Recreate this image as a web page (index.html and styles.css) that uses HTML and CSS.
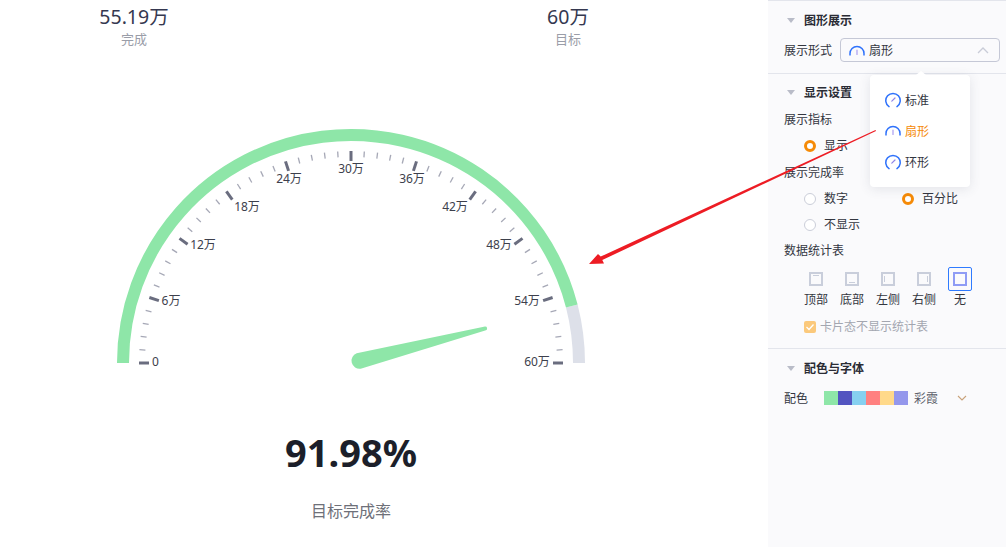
FILE: index.html
```html
<!DOCTYPE html>
<html lang="zh-CN">
<head>
    <meta charset="UTF-8">
    <title>目标完成率</title>
    <link rel="stylesheet" href="styles.css">
</head>
<body>
    <svg class="defs" width="0" height="0">
        <symbol id="icon-dial" viewBox="0 0 16 16">
            <path d="M4 14.6A7.2 7.2 0 1 1 12 14.6" fill="none" stroke="#2f72fb" stroke-width="1.5" stroke-linecap="round"/>
            <path d="M6.8 9.2L10 6" stroke="#8f83e8" stroke-width="1.2" stroke-linecap="round"/>
        </symbol>
        <symbol id="icon-fan" viewBox="0 0 16 11">
            <path d="M1 10.5V8.4A7 7 0 0 1 15 8.4V10.5" fill="none" stroke="#2f72fb" stroke-width="1.5"/>
            <path d="M8 5V9.5" stroke="#a99cf0" stroke-width="1.2" stroke-linecap="round"/>
        </symbol>
    </svg>

    <div class="app">
        <div class="main">
            <div class="stats">
                <div class="stat">
                    <div class="stat-value">55.19万</div>
                    <div class="stat-label">完成</div>
                </div>
                <div class="stat">
                    <div class="stat-value">60万</div>
                    <div class="stat-label">目标</div>
                </div>
            </div>

            <!-- 仪表盘 -->
            <svg class="gauge" viewBox="0 120 768 250" width="768" height="250">
                <path class="track" d="M571.8 306.1A228 228 0 0 1 579 363"/>
                <path class="band" d="M123 363A228 228 0 0 1 571.8 306.1"/>
                <g id="ticks"></g>
                <text class="tick-label" x="152" y="363">0</text>
                <text class="tick-label mid" x="171" y="302">6万</text>
                <text class="tick-label mid" x="203" y="246">12万</text>
                <text class="tick-label mid" x="247" y="208">18万</text>
                <text class="tick-label mid" x="289" y="180">24万</text>
                <text class="tick-label mid" x="351" y="170">30万</text>
                <text class="tick-label mid" x="412" y="180">36万</text>
                <text class="tick-label mid" x="455" y="208">42万</text>
                <text class="tick-label mid" x="499" y="246">48万</text>
                <text class="tick-label mid" x="527" y="302">54万</text>
                <text class="tick-label mid" x="537" y="363">60万</text>
                <path class="needle" d="M356.7 353.3L485 326.5A2 2 0 0 1 486 330.3L360.7 368.7A8 8 0 0 1 356.7 353.3Z"/>
            </svg>

            <div class="rate">91.98%</div>
            <div class="rate-label">目标完成率</div>
        </div>

        <div class="panel">
            <div class="section section-shape">
                <div class="section-title"><i class="caret"></i>图形展示</div>
                <div class="shape-row">
                    <span>展示形式</span>
                    <div class="select">
                        <svg class="fan-icon" width="16" height="11"><use href="#icon-fan"/></svg>
                        <span>扇形</span>
                        <svg class="select-arrow" width="12" height="7" viewBox="0 0 12 7"><path d="M1 6L6 1L11 6" fill="none" stroke="#c9ccd8" stroke-width="1.3"/></svg>
                    </div>
                </div>
            </div>

            <div class="section section-display">
                <div class="section-title"><i class="caret"></i>显示设置</div>
                <div class="row">展示指标</div>
                <div class="row indent"><label class="radio"><i class="dot on"></i>显示</label></div>
                <div class="row row-rate">展示完成率</div>
                <div class="row indent radio-pair">
                    <label class="radio"><i class="dot"></i>数字</label>
                    <label class="radio"><i class="dot on"></i>百分比</label>
                </div>
                <div class="row indent"><label class="radio"><i class="dot"></i>不显示</label></div>
                <div class="row">数据统计表</div>
                <div class="positions">
                    <div class="pos"><span class="pos-box"><i class="pos-icon top"></i></span>顶部</div>
                    <div class="pos"><span class="pos-box"><i class="pos-icon bottom"></i></span>底部</div>
                    <div class="pos"><span class="pos-box"><i class="pos-icon left"></i></span>左侧</div>
                    <div class="pos"><span class="pos-box"><i class="pos-icon right"></i></span>右侧</div>
                    <div class="pos active"><span class="pos-box"><i class="pos-icon"></i></span>无</div>
                </div>
                <div class="row indent check-row">
                    <span class="check"><svg width="12" height="12" viewBox="0 0 12 12"><path d="M2.5 6L5 8.5L9.5 3.5" fill="none" stroke="#fff" stroke-width="1.3"/></svg></span>
                    卡片态不显示统计表
                </div>
            </div>

            <div class="section section-color">
                <div class="section-title"><i class="caret"></i>配色与字体</div>
                <div class="color-row">
                    <span class="color-label">配色</span>
                    <span class="swatches">
                        <i class="swatch s1"></i><i class="swatch s2"></i><i class="swatch s3"></i><i class="swatch s4"></i><i class="swatch s5"></i><i class="swatch s6"></i>
                    </span>
                    <span class="color-name">彩霞</span>
                    <svg class="color-arrow" width="10" height="6" viewBox="0 0 10 6"><path d="M1 1L5 5L9 1" fill="none" stroke="#c9a27a" stroke-width="1.1"/></svg>
                </div>
            </div>

            <!-- 下拉菜单 -->
            <div class="dropdown">
                <div class="option"><svg width="16" height="16"><use href="#icon-dial"/></svg>标准</div>
                <div class="option selected"><svg width="16" height="11"><use href="#icon-fan"/></svg>扇形</div>
                <div class="option"><svg width="16" height="16"><use href="#icon-dial"/></svg>环形</div>
            </div>
        </div>
    </div>

    <!-- 标注箭头 -->
    <svg class="annotation" width="1006" height="547">
        <polygon points="875.5,130 876,131 602.3,260 604,263.5 589,264 598,254 600.7,256.6" fill="#ed1c24"/>
    </svg>

    <script src="script.js"></script>
</body>
</html>
```

FILE: styles.css
```css
* {
    box-sizing: border-box;
}

html, body {
    height: 100%;
}

body {
    margin: 0;
    overflow: hidden;
    background: #fff;
    color: #33363f;
    font-family: "Noto Sans", "Noto Sans CJK SC", sans-serif;
    font-size: 12px;
}

i {
    font-style: normal;
}

.defs {
    position: absolute;
}

.app {
    display: flex;
    height: 100%;
}

/* left side */
.main {
    width: 768px;
    flex: none;
}

.stats {
    display: flex;
    gap: 166px;
    height: 49px;
    padding-top: 3px;
}

.stat {
    width: 268px;
    text-align: center;
}

.stat-value {
    font-size: 19.5px;
    line-height: 28px;
    color: #353850;
}

.stat-label {
    font-size: 13px;
    line-height: 17px;
    color: #9a9da8;
}

.gauge {
    display: block;
    margin-top: 71px;
}

.band, .track {
    fill: none;
    stroke-width: 12;
}

.band {
    stroke: #8ee6a8;
}

.track {
    stroke: #dde0e9;
}

.needle {
    fill: #8ee6a8;
}

.tick-major {
    stroke: #6a6d7f;
    stroke-width: 3;
}

.tick-minor {
    stroke: #a6a8b6;
    stroke-width: 1.3;
}

.tick-label {
    fill: #3d404c;
    font-size: 12px;
    dominant-baseline: middle;
}

.tick-label.mid {
    text-anchor: middle;
}

.rate {
    width: 702px;
    margin-top: 54px;
    font-size: 38px;
    font-weight: 700;
    line-height: 56px;
    text-align: center;
    color: #1c1f2a;
}

.rate-label {
    width: 702px;
    margin-top: 21px;
    font-size: 16px;
    line-height: 20px;
    text-align: center;
    color: #6e7079;
}

/* right side */
.panel {
    position: relative;
    flex: 1;
    background: #fafafc;
    border-top: 1px solid #e3e5ec;
}

.section {
    border-bottom: 1px solid #e3e5ec;
}

.section-shape {
    height: 73px;
    padding: 10px 6px 0 16px;
}

.section-display {
    height: 275px;
    padding: 9px 0 0 16px;
}

.section-display .section-title {
    margin-bottom: 6px;
}

.section-color {
    padding: 10px 6px 0 16px;
    border-bottom: 0;
}

.section-title {
    display: flex;
    align-items: center;
    height: 18px;
    font-weight: 700;
    color: #2a2c35;
}

.caret {
    width: 0;
    height: 0;
    margin: 0 9px 0 3px;
    border-style: solid;
    border-width: 5px 4px 0;
    border-color: #b9bcc8 transparent transparent;
}

.shape-row {
    display: flex;
    align-items: center;
    gap: 8px;
    margin-top: 9px;
}

.select {
    display: flex;
    align-items: center;
    flex: 1;
    height: 24px;
    padding: 0 10px 0 8px;
    border: 1px solid #c5c8d6;
    border-radius: 4px;
}

.fan-icon {
    margin-right: 4px;
}

.select-arrow {
    margin-left: auto;
}

.row {
    height: 26px;
    line-height: 26px;
}

.row-rate {
    margin-top: 1px;
}

.indent {
    padding-left: 20px;
}

.radio {
    display: inline-flex;
    align-items: center;
    gap: 8px;
}

.radio-pair {
    display: flex;
}

.radio-pair .radio:first-child {
    width: 98px;
}

.dot {
    width: 12px;
    height: 12px;
    border: 1px solid #cbced9;
    border-radius: 50%;
    background: #fff;
}

.dot.on {
    border: 3px solid #f58a07;
}

.positions {
    display: flex;
    margin-left: 14px;
}

.pos {
    display: flex;
    flex-direction: column;
    align-items: center;
    width: 36px;
    line-height: 16px;
}

.pos-box {
    display: flex;
    align-items: center;
    justify-content: center;
    width: 24px;
    height: 24px;
    margin: 3px 0 1px;
    border: 1px solid transparent;
    border-radius: 2px;
}

.pos.active .pos-box {
    border-color: #2f7bff;
}

.pos-icon {
    position: relative;
    width: 14px;
    height: 14px;
    border: 2px solid #c9cedb;
}

.pos.active .pos-icon {
    border-color: #8f9cf5;
}

.pos-icon.top::after, .pos-icon.bottom::after {
    content: "";
    position: absolute;
    left: 2px;
    width: 6px;
    height: 1px;
    background: #c9cedb;
}

.pos-icon.top::after {
    top: 1px;
}

.pos-icon.bottom::after {
    bottom: 1px;
}

.pos-icon.left::after, .pos-icon.right::after {
    content: "";
    position: absolute;
    top: 2px;
    width: 1px;
    height: 6px;
    background: #c9cedb;
}

.pos-icon.left::after {
    left: 1px;
}

.pos-icon.right::after {
    right: 1px;
}

.check-row {
    display: flex;
    align-items: center;
    gap: 4px;
    margin-top: 6px;
    color: #a3a6b0;
}

.check {
    display: flex;
    width: 12px;
    height: 12px;
    border-radius: 2px;
    background: #fbc97c;
}

.color-row {
    display: flex;
    align-items: center;
    margin-top: 12px;
    height: 18px;
}

.color-label {
    width: 40px;
}

.swatches {
    display: flex;
}

.swatch {
    width: 14px;
    height: 14px;
}

.s1 { background: #8ee6a8; }
.s2 { background: #5254c0; }
.s3 { background: #86d0f0; }
.s4 { background: #ff8080; }
.s5 { background: #ffd98a; }
.s6 { background: #9497ec; }

.color-name {
    margin-left: 6px;
    color: #5c5f6a;
}

.color-arrow {
    margin-left: 19px;
}

.dropdown {
    position: absolute;
    top: 74px;
    left: 102px;
    width: 100px;
    height: 112px;
    padding-top: 9px;
    border-radius: 4px;
    background: #fff;
    box-shadow: 0 2px 12px rgba(60, 64, 90, 0.12);
}

.dropdown::before {
    content: "";
    position: absolute;
    top: -4px;
    left: 46px;
    width: 0;
    height: 0;
    border-style: solid;
    border-width: 0 5px 4px;
    border-color: transparent transparent #fff;
}

.option {
    display: flex;
    align-items: center;
    gap: 4px;
    height: 31px;
    padding-left: 15px;
}

.option.selected {
    color: #f58a07;
}

.annotation {
    position: absolute;
    top: 0;
    left: 0;
    pointer-events: none;
}
```

FILE: script.js
```js
// 生成仪表盘刻度
var ticks = document.getElementById('ticks');
var cx = 351, cy = 363;

for (var i = 0; i <= 50; i++) {
    var major = i % 5 === 0;
    var angle = Math.PI * i / 50;
    var inner = major ? 202 : 206;
    var line = document.createElementNS('http://www.w3.org/2000/svg', 'line');
    line.setAttribute('x1', (cx - 212 * Math.cos(angle)).toFixed(2));
    line.setAttribute('y1', (cy - 212 * Math.sin(angle)).toFixed(2));
    line.setAttribute('x2', (cx - inner * Math.cos(angle)).toFixed(2));
    line.setAttribute('y2', (cy - inner * Math.sin(angle)).toFixed(2));
    line.setAttribute('class', major ? 'tick-major' : 'tick-minor');
    ticks.appendChild(line);
}
```
